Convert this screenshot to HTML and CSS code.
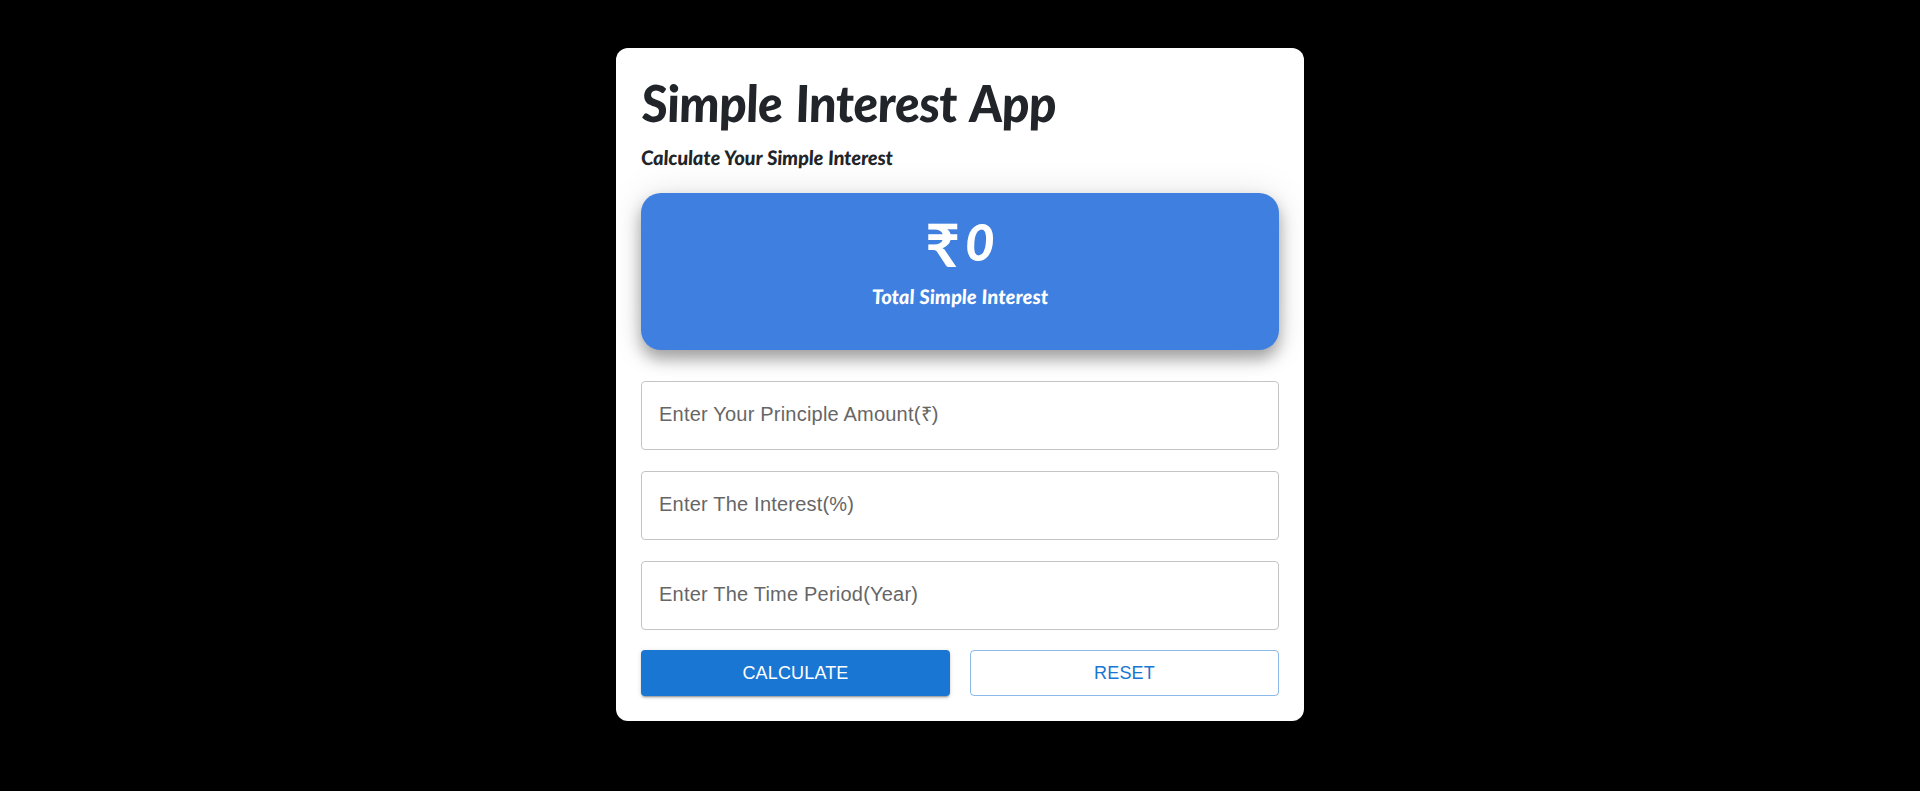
FILE: index.html
```html
<!DOCTYPE html>
<html lang="en">
<head>
<meta charset="utf-8">
<title>Simple Interest App</title>
<link rel="stylesheet" href="styles.css">
</head>
<body>
<main class="card">
<header class="heading">
<h1 class="title">Simple Interest App</h1>
<p class="subtitle">Calculate Your Simple Interest</p>
</header>
<section class="total">
<h2 class="amount"><span class="currency">₹</span><span>0</span></h2>
<p class="total-label">Total Simple Interest</p>
</section>
<form class="form">
<label class="field">Enter Your Principle Amount(₹)</label>
<label class="field">Enter The Interest(%)</label>
<label class="field">Enter The Time Period(Year)</label>
<div class="actions">
<button type="button" class="btn primary">CALCULATE</button>
<button type="button" class="btn outlined">RESET</button>
</div>
</form>
</main>
</body>
</html>
```
FILE: styles.css
```css
* { box-sizing: border-box; }
body {
  margin: 0;
  height: 791px;
  padding-top: 48px;
  display: flex;
  justify-content: center;
  align-items: flex-start;
  background: #000;
  color: #212529;
  font-family: "Liberation Sans", Arial, sans-serif;
}
h1, h2, p { margin: 0; }
.card {
  width: 688px;
  height: 673px;
  padding: 25px;
  background: #fff;
  border-radius: 12px;
}
.heading, .total { font-family: Lato, "Noto Sans", sans-serif; font-style: italic; }
.heading { height: 120px; }
.title {
  font-size: 51px;
  line-height: 59px;
  font-weight: 900;
  letter-spacing: -0.7px;
  word-spacing: 3px;
  white-space: nowrap;
  transform: skewX(5deg);
}
.subtitle {
  margin-top: 13px;
  font-size: 20px;
  line-height: 24px;
  font-weight: 900;
  letter-spacing: -0.1px;
  word-spacing: 0.6px;
  transform: skewX(4deg);
}
.total {
  height: 157px;
  padding-top: 18px;
  border-radius: 20px;
  background: #3f7fe0;
  color: #fff;
  text-align: center;
  box-shadow: 0 0 36px rgba(0, 0, 0, 0.1), 0 9px 16px rgba(0, 0, 0, 0.34);
}
.amount {
  display: flex;
  justify-content: center;
  gap: 5px;
  font-size: 51px;
  line-height: 62px;
  font-weight: 900;
}
.currency {
  font-size: 60px;
  line-height: 67px;
  height: 62px;
  font-style: normal;
  font-weight: 700;
}
.total-label {
  margin-top: 11px;
  font-size: 20px;
  line-height: 24px;
  font-weight: 900;
  letter-spacing: 0.1px;
  word-spacing: 0.5px;
  transform: skewX(4deg);
}
.form { margin-top: 31px; }
.field {
  display: block;
  height: 69px;
  margin-bottom: 21px;
  padding: 16px 17px;
  border: 1px solid #c4c4c4;
  border-radius: 4px;
  color: #666;
  font-size: 20px;
  line-height: 32px;
  letter-spacing: 0.21px;
}
.actions {
  display: grid;
  grid-template-columns: 1fr 1fr;
  gap: 20px;
  margin-top: -1px;
}
.btn {
  height: 46px;
  padding: 0;
  border: 0;
  border-radius: 4px;
  font: 18px "Liberation Sans", Arial, sans-serif;
  letter-spacing: 0.15px;
}
.primary {
  background: #1976d2;
  color: #fff;
  box-shadow: 0 3px 1px -2px rgba(0, 0, 0, 0.2), 0 2px 2px rgba(0, 0, 0, 0.14), 0 1px 5px rgba(0, 0, 0, 0.12);
}
.outlined {
  background: transparent;
  border: 1px solid rgba(25, 118, 210, 0.5);
  color: #1976d2;
}
```
